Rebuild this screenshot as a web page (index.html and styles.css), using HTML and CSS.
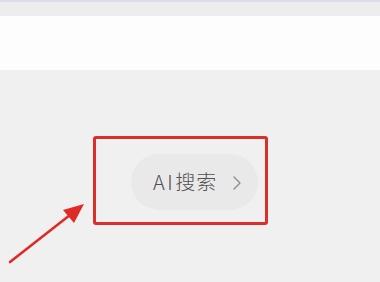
FILE: index.html
```html
<!DOCTYPE html>
<html>
<head>
<meta charset="utf-8">
<link rel="stylesheet" href="styles.css">
</head>
<body>
<div class="page">
  <div class="topbar"></div>
  <div class="band"></div>
  <div class="main">
    <div class="pill"><span class="label"><span class="ai">AI</span>搜索</span><svg class="chev" width="10" height="16" viewBox="0 0 10 16"><path d="M2 2 L8 8 L2 14" fill="none" stroke="#8a8a8a" stroke-width="1.3" stroke-linecap="round" stroke-linejoin="round"/></svg></div>
  </div>
  <div class="redbox"></div>
  <svg class="arrow" width="100" height="80" viewBox="0 0 100 80">
    <path d="M10 70 L70 23" stroke="#e02a26" stroke-width="2.6" stroke-linecap="round" fill="none"/>
    <path d="M84 12 L63 18 L74 31 Z" fill="#e02a26"/>
  </svg>
</div>
</body>
</html>
```
FILE: styles.css
```css
html, body {
  margin: 0;
  padding: 0;
  background: #f0f0f0;
}
.page {
  position: relative;
  width: 380px;
  height: 282px;
  overflow: hidden;
  background: #f0f0f0;
  font-family: "Noto Sans CJK SC", "Noto Sans", sans-serif;
}
.topbar {
  height: 14px;
  background: #ededed;
  border-top: 2px solid #dcdcec;
}
.band {
  height: 54px;
  background: #fdfdfd;
}
.main {
  display: flex;
  padding: 84px 0 0 131px;
}
.pill {
  width: 127px;
  height: 56px;
  border-radius: 28px;
  background: #e9e9e9;
  display: flex;
  align-items: center;
  padding-left: 22px;
  box-sizing: border-box;
  gap: 15px;
}
.label {
  font-size: 20px;
  font-weight: 300;
  color: #505050;
  letter-spacing: 1px;
  line-height: 1;
}
.ai {
  letter-spacing: 2.5px;
}
.chev {
  margin-top: 1px;
}
.redbox {
  position: absolute;
  left: 93px;
  top: 136px;
  width: 175px;
  height: 89px;
  box-sizing: border-box;
  border: 3px solid #dc2f2c;
  border-radius: 3px;
}
.arrow {
  position: absolute;
  left: 0;
  top: 192px;
}
```
